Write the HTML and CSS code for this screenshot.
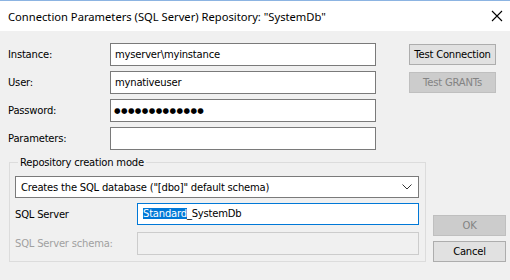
FILE: index.html
```html
<!DOCTYPE html>
<html lang="en">
<head>
    <meta charset="UTF-8">
    <title>Connection Parameters</title>
    <link rel="stylesheet" href="styles.css">
</head>
<body>
    <div class="window">
        <div class="titlebar">
            <span class="title">Connection Parameters (SQL Server) Repository: "SystemDb"</span>
            <svg class="close" width="12" height="12" viewBox="0 0 12 12">
                <path d="M1 1 L11 11 M11 1 L1 11" stroke="#000" stroke-width="1.1" fill="none"/>
            </svg>
        </div>

        <div class="content">
            <div class="top">
                <div class="fields">
                    <label>Instance:</label>
                    <div class="edit">myserver\myinstance</div>
                    <label>User:</label>
                    <div class="edit">mynativeuser</div>
                    <label>Password:</label>
                    <div class="edit password">&#9679;&#9679;&#9679;&#9679;&#9679;&#9679;&#9679;&#9679;&#9679;&#9679;&#9679;&#9679;&#9679;</div>
                    <label>Parameters:</label>
                    <div class="edit"></div>
                </div>
                <div class="side-buttons">
                    <button class="btn">Test Connection</button>
                    <button class="btn" disabled>Test GRANTs</button>
                </div>
            </div>

            <div class="bottom">
                <fieldset class="group">
                    <legend>Repository creation mode</legend>
                    <div class="combo">
                        <span>Creates the SQL database ("[dbo]" default schema)</span>
                        <svg width="10" height="6" viewBox="0 0 10 6">
                            <path d="M0.5 0.5 L5 5 L9.5 0.5" stroke="#333" stroke-width="1" fill="none"/>
                        </svg>
                    </div>
                    <div class="group-row">
                        <label>SQL Server</label>
                        <div class="edit focused"><span class="sel">Standard</span>_SystemDb</div>
                    </div>
                    <div class="group-row">
                        <label class="disabled">SQL Server schema:</label>
                        <div class="edit disabled"></div>
                    </div>
                </fieldset>
                <div class="dialog-buttons">
                    <button class="btn" disabled>OK</button>
                    <button class="btn">Cancel</button>
                </div>
            </div>
        </div>
    </div>
</body>
</html>
```

FILE: styles.css
```css
body {
    margin: 0;
    padding: 0;
    font-family: "DejaVu Sans", Tahoma, sans-serif;
    font-size: 10px;
    letter-spacing: -0.2px;
    color: #000;
}

.window {
    width: 510px;
    height: 280px;
    background-color: #f0f0f0;
    overflow: hidden;
}

.titlebar {
    height: 30px;
    background-color: #fff;
    border-top: 1px solid #8cb4e2;
    display: flex;
    align-items: center;
    justify-content: space-between;
    padding: 0 7px 0 8px;
}

.title {
    font-family: "Noto Sans", sans-serif;
    font-size: 11.2px;
    letter-spacing: 0;
}

.content {
    padding: 12px 5px 0 8px;
}

.top {
    display: flex;
}

.fields {
    display: grid;
    grid-template-columns: 102px 266px;
    grid-auto-rows: 23px;
    row-gap: 5px;
    align-items: center;
}

.edit {
    height: 23px;
    box-sizing: border-box;
    border: 1px solid #7a7a7a;
    background-color: #fff;
    padding: 0 4px;
    line-height: 21px;
    white-space: nowrap;
    overflow: hidden;
}

.password {
    font-size: 7.5px;
    letter-spacing: 0.4px;
    padding-left: 3px;
}

.side-buttons {
    display: flex;
    flex-direction: column;
    gap: 7px;
    margin-left: 33px;
    padding-top: 1px;
}

.btn {
    font-family: "DejaVu Sans", Tahoma, sans-serif;
    font-size: 10px;
    letter-spacing: -0.2px;
    color: #000;
    background-color: #e1e1e1;
    border: 1px solid #adadad;
    height: 21px;
    padding: 0;
}

.side-buttons .btn {
    width: 87px;
}

.btn:disabled {
    background-color: #cccccc;
    border-color: #bfbfbf;
    color: #838383;
}

.bottom {
    display: flex;
    align-items: flex-end;
    margin-top: 7px;
}

.group {
    width: 416px;
    height: 105px;
    box-sizing: border-box;
    margin: 0 0 0 1px;
    padding: 8px 6px 0 5px;
    border: 1px solid #dcdcdc;
}

.group legend {
    padding: 0 2px;
    margin-left: 3px;
}

.combo {
    height: 22px;
    box-sizing: border-box;
    border: 1px solid #7a7a7a;
    background-color: #fff;
    display: flex;
    align-items: center;
    justify-content: space-between;
    padding: 0 6px 0 5px;
}

.group-row {
    display: flex;
    align-items: center;
    margin-top: 5px;
}

.group-row label {
    width: 122px;
}

.group-row .edit {
    width: 282px;
}

.group-row + .group-row {
    margin-top: 7px;
}

.edit.focused {
    height: 22px;
    line-height: 20px;
    border-color: #0078d7;
    padding-left: 5px;
}

.sel {
    background-color: #0078d7;
    color: #fff;
}

.edit.disabled {
    border-color: #cccccc;
    background-color: #f0f0f0;
}

label.disabled {
    color: #a0a0a0;
}

.dialog-buttons {
    display: flex;
    flex-direction: column;
    gap: 5px;
    margin-left: 7px;
}

.dialog-buttons .btn {
    width: 73px;
}
```
